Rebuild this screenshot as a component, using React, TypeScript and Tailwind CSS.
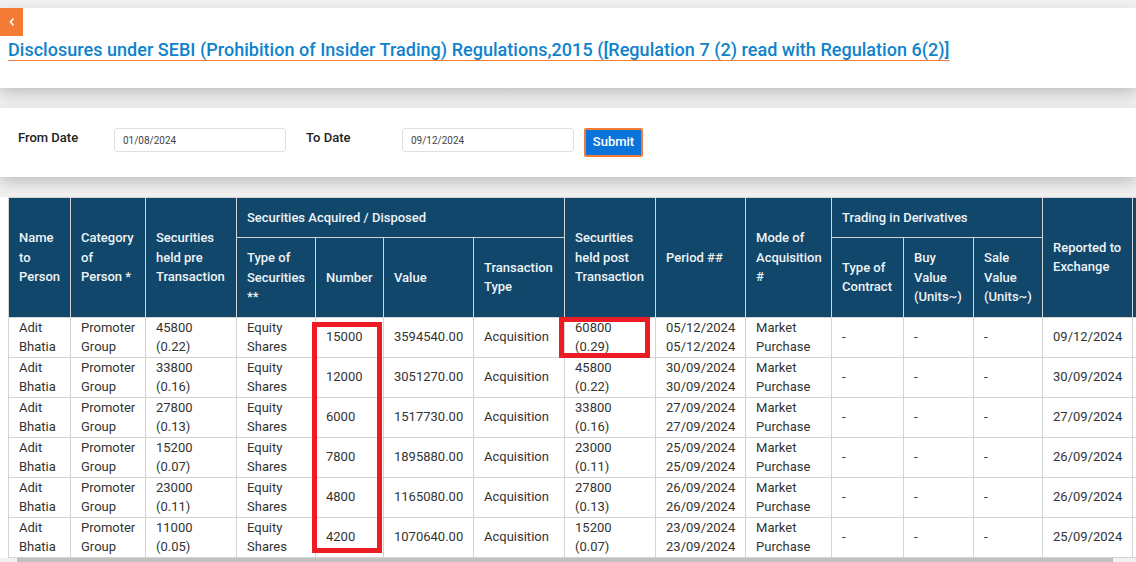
const rows = [
  ['45800', '(0.22)', '15000', '3594540.00', '60800', '(0.29)', '05/12/2024', '05/12/2024', '09/12/2024'],
  ['33800', '(0.16)', '12000', '3051270.00', '45800', '(0.22)', '30/09/2024', '30/09/2024', '30/09/2024'],
  ['27800', '(0.13)', '6000', '1517730.00', '33800', '(0.16)', '27/09/2024', '27/09/2024', '27/09/2024'],
  ['15200', '(0.07)', '7800', '1895880.00', '23000', '(0.11)', '25/09/2024', '25/09/2024', '26/09/2024'],
  ['23000', '(0.11)', '4800', '1165080.00', '27800', '(0.13)', '26/09/2024', '26/09/2024', '26/09/2024'],
  ['11000', '(0.05)', '4200', '1070640.00', '15200', '(0.07)', '23/09/2024', '23/09/2024', '25/09/2024'],
];

const widths = [62, 75, 91, 79, 68, 90, 91, 91, 90, 86, 72, 70, 69, 90, 60];

const th = 'border border-[#d4d4d4] px-[10px] pb-[0.5px] text-left align-middle font-medium leading-[19.5px]';
const td = 'border border-[#d4d4d4] px-[10px] pb-px align-middle leading-[19px] h-[40px] overflow-hidden';
const tdOne = 'border border-[#d4d4d4] px-[10px] pb-[3px] align-middle leading-[19px] h-[40px] overflow-hidden';

export default function App() {
  return (
    <div className="h-[562px] w-[1136px] overflow-hidden bg-[#f2f2f2] bg-[repeating-linear-gradient(0deg,rgba(0,0,0,0.012)_0px,rgba(0,0,0,0.012)_1px,transparent_1px,transparent_3px)] pt-2 font-['Roboto',sans-serif]">
      {/* Heading */}
      <div className="h-[80px] bg-white shadow-[0_6px_14px_rgba(0,0,0,0.2)]">
        <button className="flex h-7 w-[23px] items-center justify-center bg-[#f37b36] text-white">
          <svg width="8" height="10" viewBox="0 0 8 10" fill="none" stroke="currentColor" strokeWidth="1.6">
            <path d="M5.5 1.5 2.5 5l3 3.5" />
          </svg>
        </button>
        <h1 className="ml-2 text-[18px] leading-[28px] font-medium tracking-[0.03px] text-[#0f82cc] underline decoration-[#f37b36] decoration-1 underline-offset-[4px]">
          Disclosures under SEBI (Prohibition of Insider Trading) Regulations,2015 ([Regulation 7 (2) read with Regulation 6(2)]
        </h1>
      </div>

      {/* Filter */}
      <div className="mt-5 flex h-[69px] items-start bg-white pl-[18px] text-[13px] shadow-[0_6px_14px_rgba(0,0,0,0.2)]">
        <label className="mt-[21px] w-[96px] leading-[18px] font-medium text-[#222]">From Date</label>
        <input
          readOnly
          value="01/08/2024"
          className="mt-5 h-6 w-[172px] rounded-[3px] border border-[#dcdee4] bg-white px-2 text-[10px] text-[#444]"
        />
        <label className="mt-[21px] ml-5 w-[96px] leading-[18px] font-medium text-[#222]">To Date</label>
        <input
          readOnly
          value="09/12/2024"
          className="mt-5 h-6 w-[172px] rounded-[3px] border border-[#dcdee4] bg-white px-2 text-[10px] text-[#444]"
        />
        <button className="mt-5 ml-[10px] h-[29px] w-[59px] rounded-[2px] border-2 border-[#f37b36] bg-[#0a74da] pb-px font-medium text-white">
          Submit
        </button>
      </div>

      {/* Table */}
      <div className="relative mt-5 h-[365px] overflow-hidden bg-white pl-[8px]">
        <table className="w-[1184px] table-fixed border-collapse text-[13px] text-[#333]">
          <colgroup>
            {widths.map((w, i) => (
              <col key={i} style={{ width: w }} />
            ))}
          </colgroup>
          <thead className="bg-[#11476b] text-[#eef3f6]">
            <tr className="h-[40px]">
              <th rowSpan={2} className={th}>Name<br />to<br />Person</th>
              <th rowSpan={2} className={th}>Category<br />of<br />Person *</th>
              <th rowSpan={2} className={th}>Securities<br />held pre<br />Transaction</th>
              <th colSpan={4} className={th}>Securities Acquired / Disposed</th>
              <th rowSpan={2} className={th}>Securities<br />held post<br />Transaction</th>
              <th rowSpan={2} className={th}>Period ##</th>
              <th rowSpan={2} className={th}>Mode of<br />Acquisition<br />#</th>
              <th colSpan={3} className={th}>Trading in Derivatives</th>
              <th rowSpan={2} className={th}>Reported to<br />Exchange</th>
              <th rowSpan={2} className={th}></th>
            </tr>
            <tr className="h-[80px]">
              <th className={th}>Type of<br />Securities<br />**</th>
              <th className={th}>Number</th>
              <th className={th}>Value</th>
              <th className={th}>Transaction<br />Type</th>
              <th className={th}>Type of<br />Contract</th>
              <th className={th}>Buy<br />Value<br />(Units~)</th>
              <th className={th}>Sale<br />Value<br />(Units~)</th>
            </tr>
          </thead>
          <tbody>
            {rows.map((r, i) => (
              <tr key={i}>
                <td className={td}>Adit<br />Bhatia</td>
                <td className={td}>Promoter<br />Group</td>
                <td className={td}>{r[0]}<br />{r[1]}</td>
                <td className={td}>Equity<br />Shares</td>
                <td className={tdOne}>{r[2]}</td>
                <td className={tdOne}>{r[3]}</td>
                <td className={tdOne}>Acquisition</td>
                <td className={td}>{r[4]}<br />{r[5]}</td>
                <td className={td}>{r[6]}<br />{r[7]}</td>
                <td className={td}>Market<br />Purchase</td>
                <td className={tdOne}>-</td>
                <td className={tdOne}>-</td>
                <td className={tdOne}>-</td>
                <td className={tdOne}>{r[8]}</td>
                <td className={tdOne}></td>
              </tr>
            ))}
          </tbody>
        </table>

        {/* Red annotation boxes */}
        <div className="absolute top-[125px] left-[312px] h-[231px] w-[70px] border-[5px] border-[#ed1c24]" />
        <div className="absolute top-[120px] left-[559px] h-[41px] w-[91px] border-[5px] border-[#ed1c24]" />

        {/* Scrollbar */}
        <div className="absolute right-0 bottom-0 left-0 h-[4px] bg-[#f1f1f1]">
          <div className="ml-[17px] h-full w-[1096px] bg-[#c1c1c1]" />
        </div>
      </div>
    </div>
  );
}
